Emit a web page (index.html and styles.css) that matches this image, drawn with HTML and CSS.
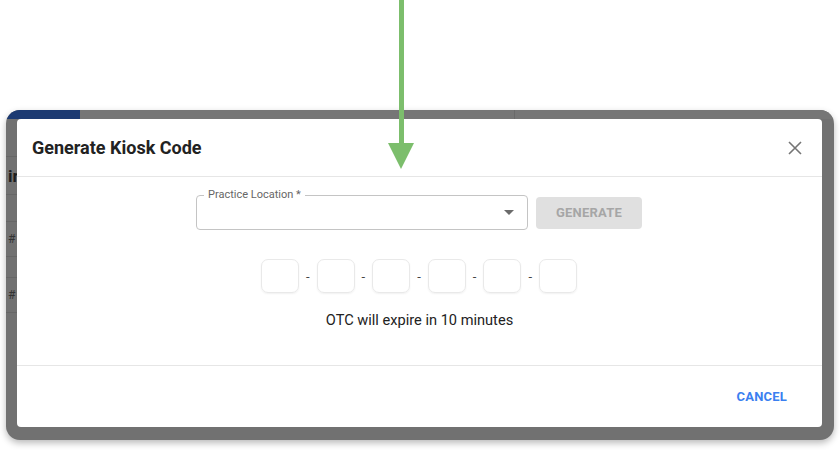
FILE: index.html
```html
<!DOCTYPE html>
<html lang="en">
<head>
<meta charset="utf-8">
<title>Generate Kiosk Code</title>
<link rel="stylesheet" href="styles.css">
</head>
<body>
<div class="arrow" aria-hidden="true">
  <div class="arrow-shaft"></div>
  <div class="arrow-head"></div>
</div>
<div class="frame">
  <div class="app">
    <div class="app-top">
      <div class="app-tab"></div>
      <div class="app-topfill"></div>
      <div class="app-topfill right"></div>
    </div>
    <div class="app-table">
      <div class="row row-a"></div>
      <div class="row row-head">ir</div>
      <div class="row row-b"></div>
      <div class="row row-cell">#</div>
      <div class="row row-c"></div>
      <div class="row row-cell">#</div>
      <div class="row row-d"></div>
    </div>
  </div>
  <div class="modal">
    <div class="modal-header">
      <h2 class="modal-title">Generate Kiosk Code</h2>
      <svg class="close-icon" width="14" height="14" viewBox="0 0 14 14"><path d="M1 1L13 13M13 1L1 13" stroke="#757575" stroke-width="1.6" fill="none"/></svg>
    </div>
    <div class="modal-body">
      <div class="select-row">
        <div class="select">
          <span class="select-label">Practice Location *</span>
          <svg class="select-arrow" width="10" height="5" viewBox="0 0 10 5"><path d="M0 0H10L5 5Z" fill="#6b6b6b"/></svg>
        </div>
        <div class="btn-generate">GENERATE</div>
      </div>
      <div class="otc-row">
        <div class="otc-box"></div><span class="otc-dash">-</span>
        <div class="otc-box"></div><span class="otc-dash">-</span>
        <div class="otc-box"></div><span class="otc-dash">-</span>
        <div class="otc-box"></div><span class="otc-dash">-</span>
        <div class="otc-box"></div><span class="otc-dash">-</span>
        <div class="otc-box"></div>
      </div>
      <p class="otc-note">OTC will expire in 10 minutes</p>
    </div>
    <div class="modal-footer">
      <span class="btn-cancel">CANCEL</span>
    </div>
  </div>
</div>
</body>
</html>
```
FILE: styles.css
```css
* { box-sizing: border-box; }
html, body { margin: 0; padding: 0; background: #ffffff; }
body {
  width: 840px;
  height: 450px;
  position: relative;
  overflow: hidden;
  font-family: Roboto, "Liberation Sans", Arial, sans-serif;
  color: #222;
}

.arrow {
  position: absolute;
  left: 387px;
  top: 0;
  width: 28px;
  z-index: 5;
  display: flex;
  flex-direction: column;
  align-items: center;
}
.arrow-shaft {
  width: 5px;
  height: 143px;
  background: #7cbe6c;
}
.arrow-head {
  width: 0;
  height: 0;
  border-left: 13px solid transparent;
  border-right: 13px solid transparent;
  border-top: 26px solid #7cbe6c;
}

.frame {
  position: relative;
  margin: 110px 0 0 6px;
  width: 828px;
  height: 330px;
  border-radius: 14px;
  overflow: hidden;
  background: #717171;
  box-shadow: 0 3px 7px rgba(0, 0, 0, 0.28);
}

.app {
  display: flex;
  flex-direction: column;
  height: 100%;
}
.app-top {
  display: flex;
  height: 9px;
  flex: none;
}
.app-tab {
  width: 74px;
  background: #1c3a72;
  border-top-left-radius: 14px;
}
.app-topfill {
  width: 435px;
  background: #767676;
  border-right: 1px solid #6a6a6a;
}
.app-topfill.right {
  flex: 1;
  border-right: none;
}
.app-table {
  display: flex;
  flex-direction: column;
  width: 11px;
  flex: 1;
}
.row {
  border-bottom: 1px solid #666;
  font-size: 14px;
  color: #2a2a2a;
  padding-left: 2px;
  white-space: nowrap;
}
.row-a { height: 38px; }
.row-head { height: 38px; font-weight: 700; font-size: 17px; line-height: 38px; color: #1e1e1e; }
.row-b { height: 27px; }
.row-cell { height: 35px; line-height: 35px; font-size: 12px; color: #333; }
.row-c { height: 21px; }
.row-d { flex: 1; border-bottom: none; }

.modal {
  position: absolute;
  left: 11px;
  top: 9px;
  width: 805px;
  height: 308px;
  background: #ffffff;
  border-radius: 4px;
  display: flex;
  flex-direction: column;
}
.modal-header {
  height: 58px;
  flex: none;
  display: flex;
  align-items: center;
  justify-content: space-between;
  padding: 0 20px 0 15px;
  border-bottom: 1px solid #e6e6e6;
}
.modal-title {
  margin: 0;
  font-size: 18px;
  font-weight: 700;
  color: #222;
  letter-spacing: 0;
}
.close-icon { display: block; margin-top: 1px; }

.modal-body {
  flex: 1;
  display: flex;
  flex-direction: column;
  align-items: center;
  padding-top: 18px;
}
.select-row {
  display: flex;
  align-items: center;
  gap: 8px;
  margin-left: -1px;
}
.select {
  position: relative;
  width: 332px;
  height: 35px;
  border: 1px solid #c4c4c4;
  border-radius: 4px;
  display: flex;
  align-items: center;
  justify-content: flex-end;
  padding-right: 13px;
}
.select-label {
  position: absolute;
  left: 7px;
  top: -8px;
  padding: 0 4px;
  background: #fff;
  font-size: 11px;
  line-height: 14px;
  color: #666;
}
.select-arrow { display: block; }
.btn-generate {
  width: 106px;
  height: 32px;
  border-radius: 4px;
  background: #e0e0e0;
  color: #a6a6a6;
  font-size: 13px;
  font-weight: 700;
  letter-spacing: 0.2px;
  display: flex;
  align-items: center;
  justify-content: center;
}

.otc-row {
  display: flex;
  align-items: center;
  margin-top: 29px;
  margin-left: -1px;
}
.otc-box {
  width: 38px;
  height: 34px;
  border: 1px solid #e9e9e9;
  border-radius: 7px;
  box-shadow: 0 1px 2px rgba(0, 0, 0, 0.06);
}
.otc-dash {
  width: 17.6px;
  text-align: center;
  font-size: 13px;
  color: #444;
}
.otc-note {
  margin: 17px 0 0;
  font-size: 14.6px;
  line-height: 20px;
  color: #222;
}

.modal-footer {
  height: 62px;
  flex: none;
  border-top: 1px solid #e6e6e6;
  display: flex;
  align-items: center;
  justify-content: flex-end;
  padding-right: 35px;
}
.btn-cancel {
  font-size: 13px;
  font-weight: 700;
  letter-spacing: 0.2px;
  color: #3b7ff0;
}
```
